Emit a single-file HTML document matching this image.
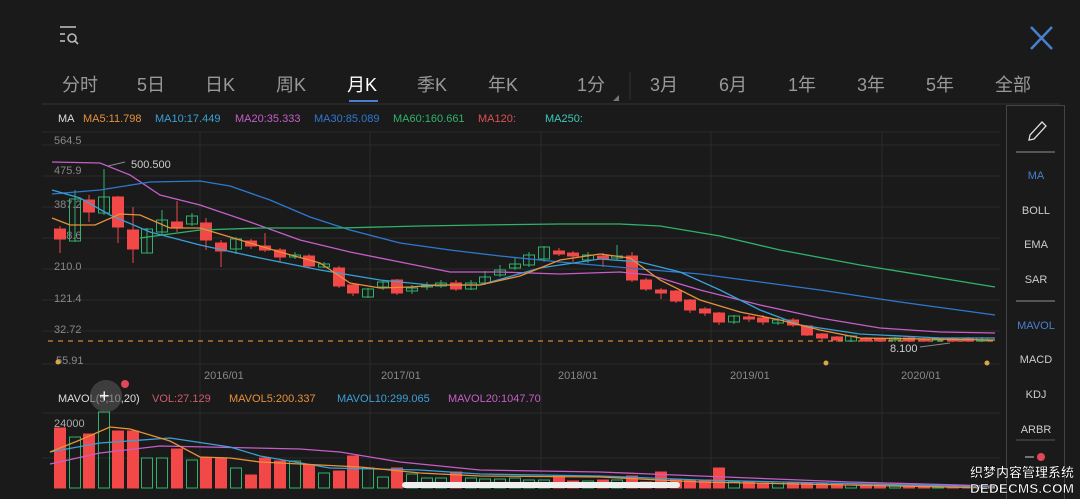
<!DOCTYPE html>
<html><head><meta charset="utf-8"><style>
html,body{margin:0;padding:0;background:#1a1a1a;width:1080px;height:499px;overflow:hidden;font-family:"Liberation Sans","Noto Sans CJK SC",sans-serif}
svg{position:absolute;left:0;top:0}
</style></head><body>
<svg id="s" width="1080" height="499" xmlns="http://www.w3.org/2000/svg" font-family="Liberation Sans, Noto Sans CJK SC, sans-serif">
<rect width="1080" height="499" fill="#1a1a1a"/>
<g stroke="#bbb" stroke-width="1.6" fill="none">
<line x1="60" y1="27" x2="76" y2="27"/><line x1="60" y1="34" x2="65" y2="34"/><line x1="60" y1="41" x2="65" y2="41"/>
<circle cx="72" cy="38" r="4"/><line x1="75" y1="41" x2="78" y2="44"/>
</g>
<g stroke="#4a7fd0" stroke-width="2.5"><line x1="1031" y1="27" x2="1052" y2="49"/><line x1="1052" y1="27" x2="1031" y2="49"/></g>
<g font-size="18" fill="#999">
<text x="62" y="91">分时</text><text x="137" y="91">5日</text><text x="205" y="91">日K</text><text x="276" y="91">周K</text>
<text x="347" y="91" fill="#fff">月K</text><text x="417" y="91">季K</text><text x="488" y="91">年K</text>
<text x="577" y="91">1分</text><text x="650" y="91">3月</text><text x="719" y="91">6月</text><text x="788" y="91">1年</text><text x="857" y="91">3年</text><text x="926" y="91">5年</text><text x="995" y="91">全部</text>
</g>
<rect x="349" y="100" width="29" height="2" fill="#4a7fd0"/>
<polygon points="613,101 619,95 619,101" fill="#777"/>
<line x1="630" y1="72" x2="630" y2="100" stroke="#333"/>
<line x1="42" y1="104" x2="1060" y2="104" stroke="#333"/>
<g font-size="11">
<text x="58" y="122" fill="#ddd">MA</text>
<text x="83" y="122" fill="#e8913a">MA5:11.798</text>
<text x="155" y="122" fill="#3aa0d8">MA10:17.449</text>
<text x="235" y="122" fill="#c65ec9">MA20:35.333</text>
<text x="314" y="122" fill="#2f78d0">MA30:85.089</text>
<text x="393" y="122" fill="#2fb36a">MA60:160.661</text>
<text x="478" y="122" fill="#e05050">MA120:</text>
<text x="545" y="122" fill="#3cc8b8">MA250:</text>
</g>
<g stroke="#2a2a2a" stroke-width="1">
<line x1="42" y1="132" x2="1000" y2="132"/><line x1="42" y1="145" x2="1000" y2="145"/><line x1="42" y1="176" x2="1000" y2="176"/><line x1="42" y1="207" x2="1000" y2="207"/><line x1="42" y1="238" x2="1000" y2="238"/><line x1="42" y1="269" x2="1000" y2="269"/><line x1="42" y1="300" x2="1000" y2="300"/><line x1="42" y1="331" x2="1000" y2="331"/><line x1="42" y1="364" x2="1000" y2="364"/>
<line x1="42" y1="413" x2="1000" y2="413"/><line x1="42" y1="458" x2="1000" y2="458"/>
<line x1="200" y1="132" x2="200" y2="490"/><line x1="370" y1="132" x2="370" y2="490"/><line x1="541" y1="132" x2="541" y2="490"/><line x1="711" y1="132" x2="711" y2="490"/><line x1="882" y1="132" x2="882" y2="490"/>
</g>
<g font-size="11" fill="#888">
<text x="54" y="144">564.5</text><text x="54" y="174">475.9</text><text x="54" y="208">387.2</text><text x="54" y="239">298.6</text><text x="54" y="270">210.0</text><text x="54" y="302">121.4</text><text x="54" y="333">32.72</text><text x="56" y="364">55.91</text>
<text x="204" y="379">2016/01</text><text x="381" y="379">2017/01</text><text x="558" y="379">2018/01</text><text x="730" y="379">2019/01</text><text x="901" y="379">2020/01</text>
</g>
<circle cx="58" cy="362" r="2.5" fill="#d4a84a"/><circle cx="826" cy="363" r="2.5" fill="#d4a84a"/><circle cx="987" cy="363" r="2.5" fill="#d4a84a"/>
<line x1="48" y1="341" x2="998" y2="341" stroke="#d08a3a" stroke-dasharray="5,5" stroke-width="1.2"/>
<g id="candles"></g>
<g fill="none" stroke-width="1.3">
<polyline stroke="#c65ec9" points="52,162 100,163 130,175 160,195 200,205 250,222 300,240 350,252 400,262 450,272 500,272 560,274 620,272 650,275 700,290 760,305 820,318 880,328 940,332 995,333"/>
<polyline stroke="#2f78d0" points="52,194 100,190 150,182 200,181 230,186 270,200 310,217 350,230 400,243 450,250 500,256 560,262 640,269 700,274 760,282 820,290 900,302 995,315"/>
<polyline stroke="#2fb36a" points="140,238 200,230 260,228 340,228 420,226 480,225 560,224 620,224 660,226 720,236 780,250 860,265 940,278 995,287"/>
<polyline stroke="#3aa0d8" points="52,190 80,198 110,215 150,232 200,245 260,258 320,270 380,280 430,285 480,285 540,268 600,259 640,262 680,272 720,290 760,310 800,325 860,334 940,338 995,338"/>
<polyline stroke="#e8913a" points="52,218 70,225 95,225 120,214 140,215 170,228 200,228 240,240 280,252 320,263 350,283 380,288 410,287 440,285 480,285 520,276 560,260 600,254 630,258 660,280 700,300 740,312 780,320 820,330 860,338 995,340"/>
</g>
<polyline fill="none" stroke="#888" points="108,166 125,162"/>
<text x="131" y="168" font-size="11" fill="#ccc">500.500</text>
<polyline fill="none" stroke="#888" points="920,347 950,343"/>
<text x="890" y="352" font-size="11" fill="#ccc">8.100</text>
<g font-size="11">
<text x="58" y="402" fill="#ddd">MAVOL(5,10,20)</text>
<text x="152" y="402" fill="#d05a6a">VOL:27.129</text>
<text x="229" y="402" fill="#e8913a">MAVOL5:200.337</text>
<text x="337" y="402" fill="#3aa0d8">MAVOL10:299.065</text>
<text x="448" y="402" fill="#c65ec9">MAVOL20:1047.70</text>
<text x="54" y="427" fill="#aaa">24000</text>
</g>
<g id="vol"></g>
<g fill="none" stroke-width="1.3">
<polyline stroke="#c65ec9" points="50,464 100,453 160,446 300,449 340,452 400,462 480,470 600,472 700,476 850,482 995,486"/>
<polyline stroke="#3aa0d8" points="50,452 100,443 170,438 230,447 260,456 330,468 420,470 480,474 600,476 700,480 995,487"/>
<polyline stroke="#e8913a" points="50,452 80,440 110,427 130,429 170,441 200,457 230,458 260,462 300,464 360,467 420,473 480,476 600,477 700,482 995,488"/>
</g>
<circle cx="106" cy="396" r="16" fill="#555" opacity="0.6"/><text x="99" y="402" fill="#fff" font-size="18">+</text>
<circle cx="125" cy="384" r="4" fill="#e04858"/>
<rect x="402" y="482" width="278" height="6" rx="3" fill="#eee"/>
<rect x="1006.5" y="105.5" width="58" height="400" fill="#1a1a1a" stroke="#444"/>
<path d="M1030 135 l12 -13 l4 4 l-12 13 l-5 1 z" fill="none" stroke="#ddd" stroke-width="1.3"/>
<line x1="1016" y1="152" x2="1055" y2="152" stroke="#555" stroke-width="2"/>
<line x1="1016" y1="301" x2="1055" y2="301" stroke="#555" stroke-width="2"/>
<g font-size="11" fill="#ccc" text-anchor="middle">
<text x="1036" y="179" fill="#4a7fd0">MA</text><text x="1036" y="214">BOLL</text><text x="1036" y="248">EMA</text><text x="1036" y="283">SAR</text>
<text x="1036" y="329" fill="#4a7fd0">MAVOL</text><text x="1036" y="363">MACD</text><text x="1036" y="398">KDJ</text><text x="1036" y="433">ARBR</text>
</g>
<line x1="1016" y1="440" x2="1055" y2="440" stroke="#555"/>
<line x1="1025" y1="457" x2="1034" y2="457" stroke="#ccc"/><circle cx="1041" cy="457" r="4" fill="#e04858"/>
<g font-weight="bold" fill="#fff" stroke="#000" stroke-width="0.5">
<text x="970" y="477" font-size="13" textLength="104" lengthAdjust="spacingAndGlyphs">织梦内容管理系统</text><text x="970" y="493" font-size="13" textLength="104" lengthAdjust="spacingAndGlyphs">DEDECMS.COM</text>
</g>
</svg>
<script>
var R="#f24848",G="#2fb36a";
var c=[[60,229,239,226,253,R],[75,199,241,190,242,G],[89,200,212,195,222,R],[104,197,213,169,215,G],[118,197,227,196,243,R],[133,230,249,207,263,R],[147,229,253,228,253,G],[162,220,232,210,235,G],[177,222,228,201,232,R],[192,216,224,213,226,G],[206,223,240,218,250,R],[221,243,251,240,267,R],[236,239,249,237,254,G],[251,241,246,239,249,R],[265,246,250,233,252,R],[280,250,257,248,262,R],[295,255,257,252,259,G],[309,256,266,254,268,R],[324,264,267,262,268,G],[339,268,286,266,288,R],[353,285,293,284,296,R],[368,289,297,288,298,G],[383,282,287,280,290,G],[397,280,293,279,295,R],[412,288,291,285,294,G],[427,285,287,282,290,G],[441,283,286,280,288,G],[456,283,289,280,291,R],[471,283,289,280,290,G],[485,277,283,271,285,G],[500,270,275,265,277,G],[515,264,268,258,270,G],[529,255,265,252,267,G],[544,247,259,246,262,G],[559,251,254,248,256,R],[573,253,256,251,262,R],[588,255,260,252,263,G],[603,256,259,253,267,R],[617,256,258,245,260,G],[632,256,280,252,282,R],[646,280,289,278,291,R],[661,290,293,288,299,R],[676,291,301,290,303,R],[690,300,310,299,313,R],[705,309,313,307,316,R],[719,313,322,312,325,R],[734,316,322,315,324,G],[749,317,319,315,322,R],[763,318,322,315,325,R],[778,320,323,318,325,G],[793,320,325,318,327,R],[807,326,335,325,336,R],[822,334,338,333,340,R],[837,337,340,336,342,R],[851,336,341,335,342,G],[866,338,341,337,342,R],[880,339,341,338,342,R],[895,338,340,337,342,G],[909,338,341,336,342,R],[924,339,341,338,342,R],[938,338,340,337,342,G],[953,339,341,338,342,R],[968,338,341,337,342,R],[982,338,341,337,342,G]];
var s="";
c.forEach(function(d){var f=d[5]==R?R:"none";s+='<line x1="'+d[0]+'" y1="'+d[3]+'" x2="'+d[0]+'" y2="'+d[4]+'" stroke="'+d[5]+'"/><rect x="'+(d[0]-5.5)+'" y="'+d[1]+'" width="11" height="'+Math.max(2,d[2]-d[1])+'" fill="'+f+'" stroke="'+d[5]+'"/>';});
document.getElementById("candles").innerHTML=s;
var vh=[60,51,54,76,57,57,30,30,39,28,30,30,20,13,30,27,27,23,15,17,32,20,11,20,14,10,10,16,10,9,9,10,8,8,12,7,7,8,8,12,6,16,9,8,8,20,6,6,5,6,5,5,4,4,3,3,3,3,3,2,2,2,2,2,2];
var v="";c.forEach(function(d,i){var h=vh[i]||2,col=d[5];v+='<rect x="'+(d[0]-5.5)+'" y="'+(488-h)+'" width="11" height="'+h+'" fill="'+(col==R?R:"none")+'" stroke="'+col+'"/>';});
document.getElementById("vol").innerHTML=v;
</script>
</body></html>
